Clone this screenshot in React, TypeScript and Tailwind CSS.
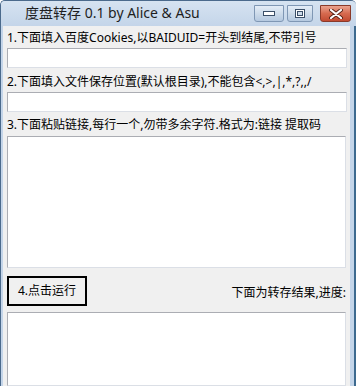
import React from "react";

const font = {
  fontFamily: '"Noto Sans", "Noto Sans CJK SC", sans-serif',
};

function CaptionButtons() {
  return (
    <div className="flex items-start pt-[4px] pr-[5px]">
      <div className="flex h-[17px] w-[30px] items-center justify-center rounded-b-[3px] border border-[#7f97b4] bg-gradient-to-b from-[#e4edf7] via-[#cddbea] to-[#b5c9e0]">
        <svg width="12" height="5" viewBox="0 0 12 5">
          <rect x="0.5" y="0.5" width="11" height="4" fill="#fff" stroke="#3b4f68" />
        </svg>
      </div>
      <div className="ml-[3px] flex h-[17px] w-[26px] items-center justify-center rounded-b-[3px] border border-[#7f97b4] bg-gradient-to-b from-[#e4edf7] via-[#cddbea] to-[#b5c9e0]">
        <svg width="10" height="9" viewBox="0 0 10 9">
          <rect x="0.5" y="0.5" width="9" height="8" fill="#fff" stroke="#3b4f68" />
          <rect x="2.5" y="2.5" width="5" height="4" fill="#cddbea" stroke="#3b4f68" />
        </svg>
      </div>
      <div className="ml-[7px] flex h-[17px] w-[31px] items-center justify-center rounded-b-[3px] border border-[#8a3a2a] bg-gradient-to-b from-[#eaa28f] via-[#d66a4f] to-[#c24a31]">
        <svg width="14" height="10" viewBox="0 0 14 10">
          <path d="M2 1 L12 9 M12 1 L2 9" stroke="#5a2418" strokeWidth="4" strokeLinecap="round" />
          <path d="M2 1 L12 9 M12 1 L2 9" stroke="#fff" strokeWidth="2.2" strokeLinecap="round" />
        </svg>
      </div>
    </div>
  );
}

function Field() {
  return (
    <div className="ml-[4px] mr-[3px] h-[20px] shrink-0 border border-[#dbdfe6] border-t-[#abadb3] border-l-[#abadb3] bg-white" />
  );
}

export default function App() {
  return (
    <div
      className="flex h-[386px] w-[356px] flex-col overflow-hidden rounded-t-[5px] border-l border-t border-[#4b6a8c] bg-[#c4d5e9] text-[12px] text-black"
      style={font}
    >
      {/* title bar */}
      <div className="flex h-[25px] shrink-0 items-start justify-between bg-gradient-to-b from-[#d6e3f1] to-[#c4d5e9]">
        <div className="pl-[24px] pt-[3px] text-[14px] leading-[18px] text-[#1e1e1e]">
          度盘转存 0.1 by Alice &amp; Asu
        </div>
        <CaptionButtons />
      </div>

      <div className="flex min-h-0 flex-1">
        <div className="w-[2px] shrink-0 bg-[#c4d5e9]" />
        {/* client */}
        <div className="flex min-h-0 flex-1 flex-col bg-[#f0f0f0]">
          <div className="h-[22px] shrink-0 pl-[4px] pt-[3px] leading-[18px]">
            1.下面填入百度Cookies,以BAIDUID=开头到结尾,不带引号
          </div>
          <Field />
          <div className="h-[24px] shrink-0 pl-[4px] pt-[5px] leading-[18px]">
            2.下面填入文件保存位置(默认根目录),不能包含&lt;,&gt;,|,*,?,,/
          </div>
          <Field />
          <div className="h-[24px] shrink-0 pl-[4px] pt-[4px] leading-[18px]">
            3.下面粘贴链接,每行一个,勿带多余字符.格式为:链接 提取码
          </div>
          <div className="ml-[4px] mr-[4px] h-[132px] shrink-0 border border-[#dbdfe6] border-t-[#abadb3] border-l-[#abadb3] bg-white" />
          <div className="flex h-[44px] shrink-0 items-start justify-between pl-[4px] pr-[4px] pt-[8px]">
            <div className="flex h-[30px] w-[80px] items-center justify-center border-2 border-black bg-[#f0f0f0]">
              4.点击运行
            </div>
            <div className="self-center pb-[2px]">下面为转存结果,进度:</div>
          </div>
          <div className="ml-[4px] mr-[4px] flex-1 border border-[#dbdfe6] border-t-[#abadb3] border-l-[#abadb3] bg-white" />
        </div>
        <div className="w-[4px] shrink-0 bg-[#c4d5e9]" />
        <div className="w-[2px] shrink-0 bg-[#3d6a8f]" />
      </div>
    </div>
  );
}
